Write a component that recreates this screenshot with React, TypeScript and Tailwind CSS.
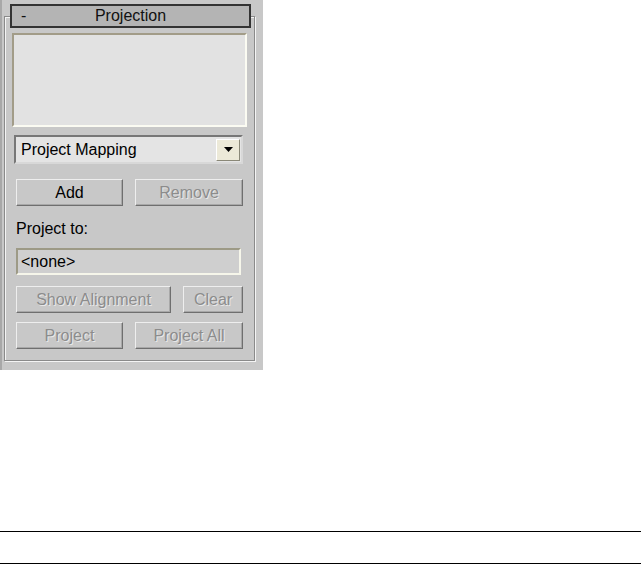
import React from "react";

const font = "font-['Liberation_Sans',Arial,sans-serif]";

const Btn: React.FC<{ label: string; w: string; disabled?: boolean }> = ({ label, w, disabled }) => (
  <div
    className={`${w} h-[27px] flex items-center justify-center text-[16px] leading-none border border-t-[#eeeeee] border-l-[#eeeeee] border-r-[#6f6f6f] border-b-[#6f6f6f] shadow-[inset_-1px_-1px_0_#a8a8a8] ${
      disabled ? "text-[#8c8c8c] [text-shadow:1px_1px_0_#e8e8e8]" : "text-black"
    }`}
  >
    {label}
  </div>
);

const App: React.FC = () => {
  return (
    <div className={`w-[641px] h-[564px] bg-white relative ${font}`}>
      <div className="w-[263px] h-[370px] bg-[#c8c8c8] border-l-2 border-[#a8a8a8] pt-[4px]">
        {/* rollout title */}
        <div className="relative z-10 ml-[8px] w-[241px] h-[24px] bg-[#b4b4b4] border-2 border-[#333333] flex items-center text-[16px] leading-none text-[#111]">
          <span className="w-[30px] pl-[9px]">-</span>
          <span className="flex-1 text-center pr-[30px]">Projection</span>
        </div>
        {/* group box */}
        <div className="-mt-[12px] ml-[2px] w-[251px] h-[345px] border border-[#8a8a8a] shadow-[1px_1px_0_#f4f4f4,inset_1px_1px_0_#f4f4f4] pt-[16px] pl-[7px]">
          <div className="w-[235px] h-[94px] bg-[#e2e2e2] border-2 border-t-[#a29c88] border-l-[#a29c88] border-r-[#fbfbf2] border-b-[#fbfbf2]" />
          {/* dropdown */}
          <div className="mt-[8px] ml-[2px] w-[229px] h-[29px] bg-[#e4e4e4] border-2 border-t-[#777777] border-l-[#777777] border-r-[#d8d8d8] border-b-[#d8d8d8] flex items-center">
            <span className="flex-1 pl-[5px] text-[16px] leading-none text-black">Project Mapping</span>
            <div className="w-[24px] h-[22px] mr-[1px] bg-[#ece9d8] border border-t-[#ffffff] border-l-[#ffffff] border-r-[#8a8878] border-b-[#8a8878] flex items-center justify-center">
              <svg width="9" height="5" viewBox="0 0 9 5">
                <path d="M0 0h9L4.5 5z" fill="#000" />
              </svg>
            </div>
          </div>
          <div className="mt-[15px] ml-[4px] flex gap-[12px]">
            <Btn label="Add" w="w-[107px]" />
            <Btn label="Remove" w="w-[108px]" disabled />
          </div>
          <div className="mt-[14px] ml-[4px] text-[16px] text-black leading-[18px]">Project to:</div>
          <div className="mt-[10px] ml-[4px] w-[225px] h-[27px] bg-[#cfcfcf] border-2 border-t-[#9d9a86] border-l-[#9d9a86] border-r-[#f6f6ea] border-b-[#f6f6ea] flex items-center pl-[3px] text-[16px] leading-none text-black">
            &lt;none&gt;
          </div>
          <div className="mt-[11px] ml-[4px] flex gap-[12px]">
            <Btn label="Show Alignment" w="w-[155px]" disabled />
            <Btn label="Clear" w="w-[60px]" disabled />
          </div>
          <div className="mt-[9px] ml-[4px] flex gap-[12px]">
            <Btn label="Project" w="w-[107px]" disabled />
            <Btn label="Project All" w="w-[108px]" disabled />
          </div>
        </div>
      </div>
      <div className="absolute left-0 top-[531px] w-[641px] h-px bg-black" />
      <div className="absolute left-0 top-[563px] w-[641px] h-px bg-black" />
    </div>
  );
};

export default App;
